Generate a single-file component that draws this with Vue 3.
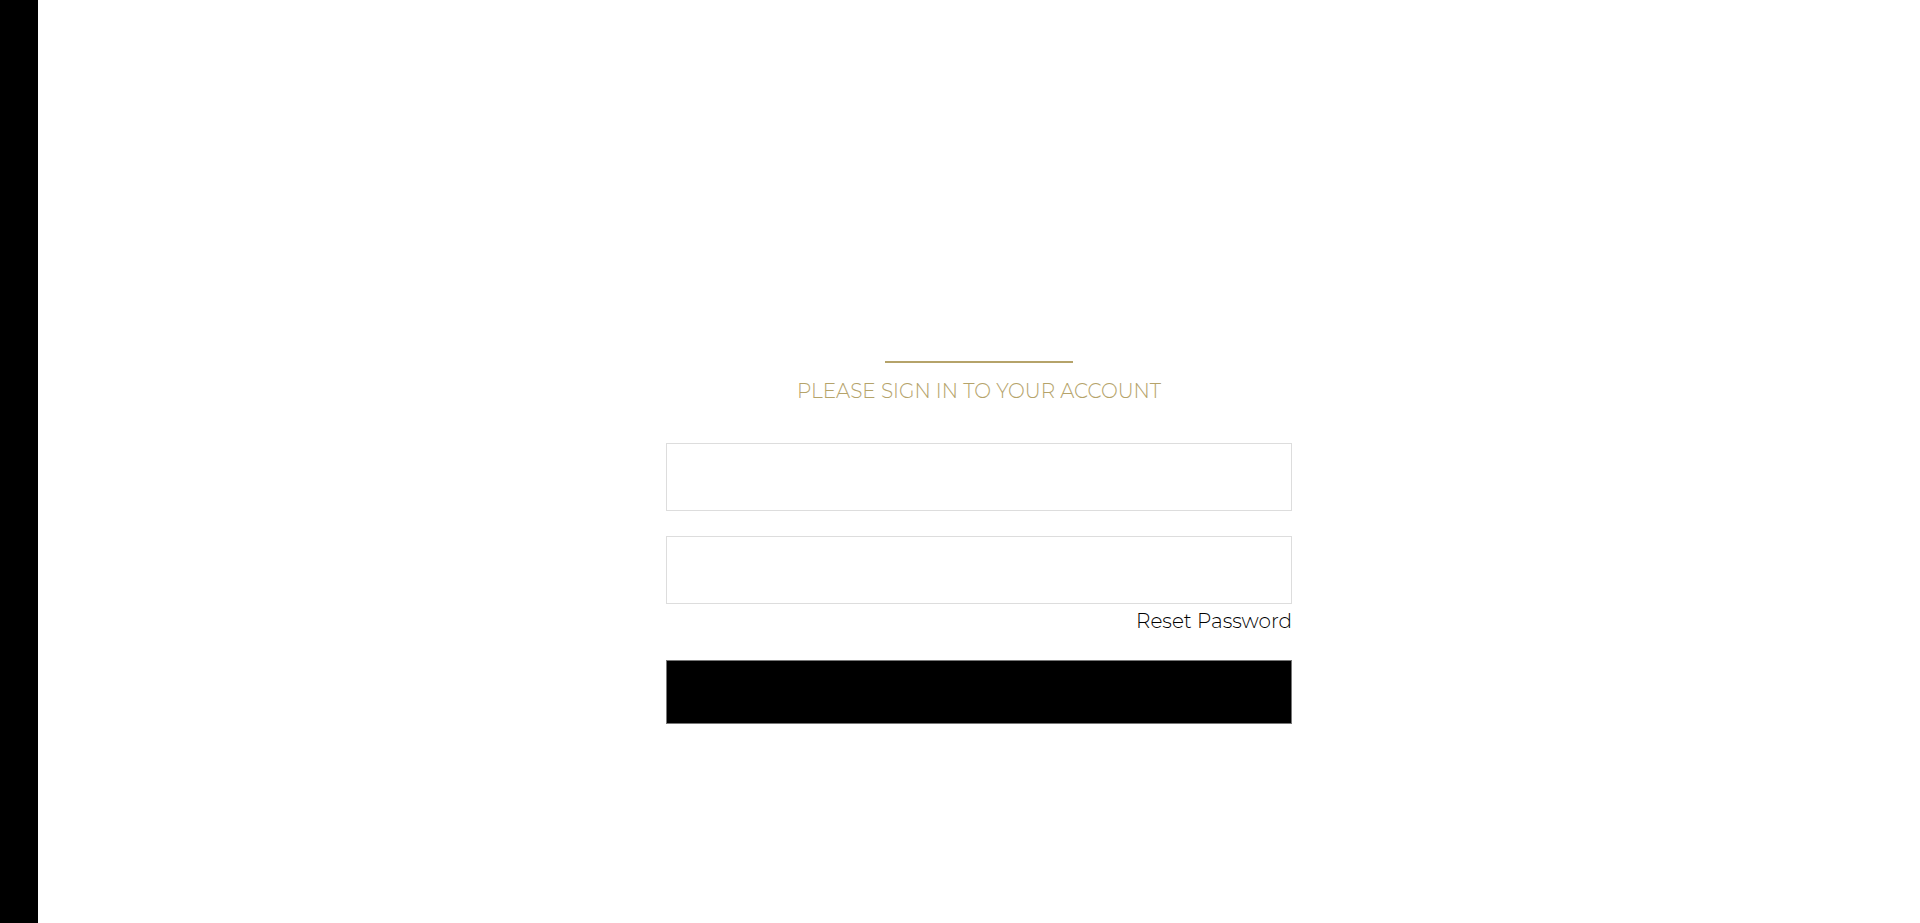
<script setup>
import { ref } from 'vue'

const username = ref('')
const password = ref('')
</script>

<template>
  <div class="page">
    <aside class="rail"></aside>
    <main class="content">
      <form class="login" @submit.prevent>
        <div class="rule"></div>
        <h1 class="title">PLEASE SIGN IN TO YOUR ACCOUNT</h1>
        <input v-model="username" class="field" type="text" aria-label="Username" autocomplete="username" />
        <input v-model="password" class="field" type="password" aria-label="Password" autocomplete="current-password" />
        <a class="reset" href="#">Reset Password</a>
        <button class="submit" type="submit" aria-label="Sign in"></button>
      </form>
    </main>
  </div>
</template>

<style>
body {
  margin: 0;
  background: #fff;
}
</style>

<style scoped>
.page {
  display: flex;
  min-height: 100vh;
  font-family: Montserrat, Inter, "Open Sans", sans-serif;
  font-weight: 300;
}

.rail {
  flex: 0 0 38px;
  background: #000;
}

.content {
  flex: 1;
  display: flex;
  justify-content: center;
  align-items: flex-start;
  padding: 361px 24px 48px;
}

.login {
  display: flex;
  flex-direction: column;
  width: 100%;
  max-width: 626px;
}

.rule {
  align-self: center;
  width: 30%;
  height: 2px;
  background: #b5a36a;
}

.title {
  margin: 16px 0 40px;
  color: #b5a36a;
  font-size: 20px;
  font-weight: 300;
  line-height: 24px;
  text-align: center;
}

.field {
  box-sizing: border-box;
  width: 100%;
  height: 68px;
  margin: 0;
  padding: 0 20px;
  border: 1px solid #ddd;
  border-radius: 0;
  background: #fff;
  font: inherit;
  font-size: 20px;
  outline: none;
}

.field + .field {
  margin-top: 25px;
}

.reset {
  align-self: flex-end;
  margin: 5px 0 27px;
  color: #000;
  font-size: 20px;
  line-height: 24px;
  text-decoration: none;
}

.submit {
  width: 100%;
  height: 64px;
  padding: 0;
  border: 1px solid #777;
  border-radius: 0;
  background: #000;
  cursor: pointer;
}
</style>
